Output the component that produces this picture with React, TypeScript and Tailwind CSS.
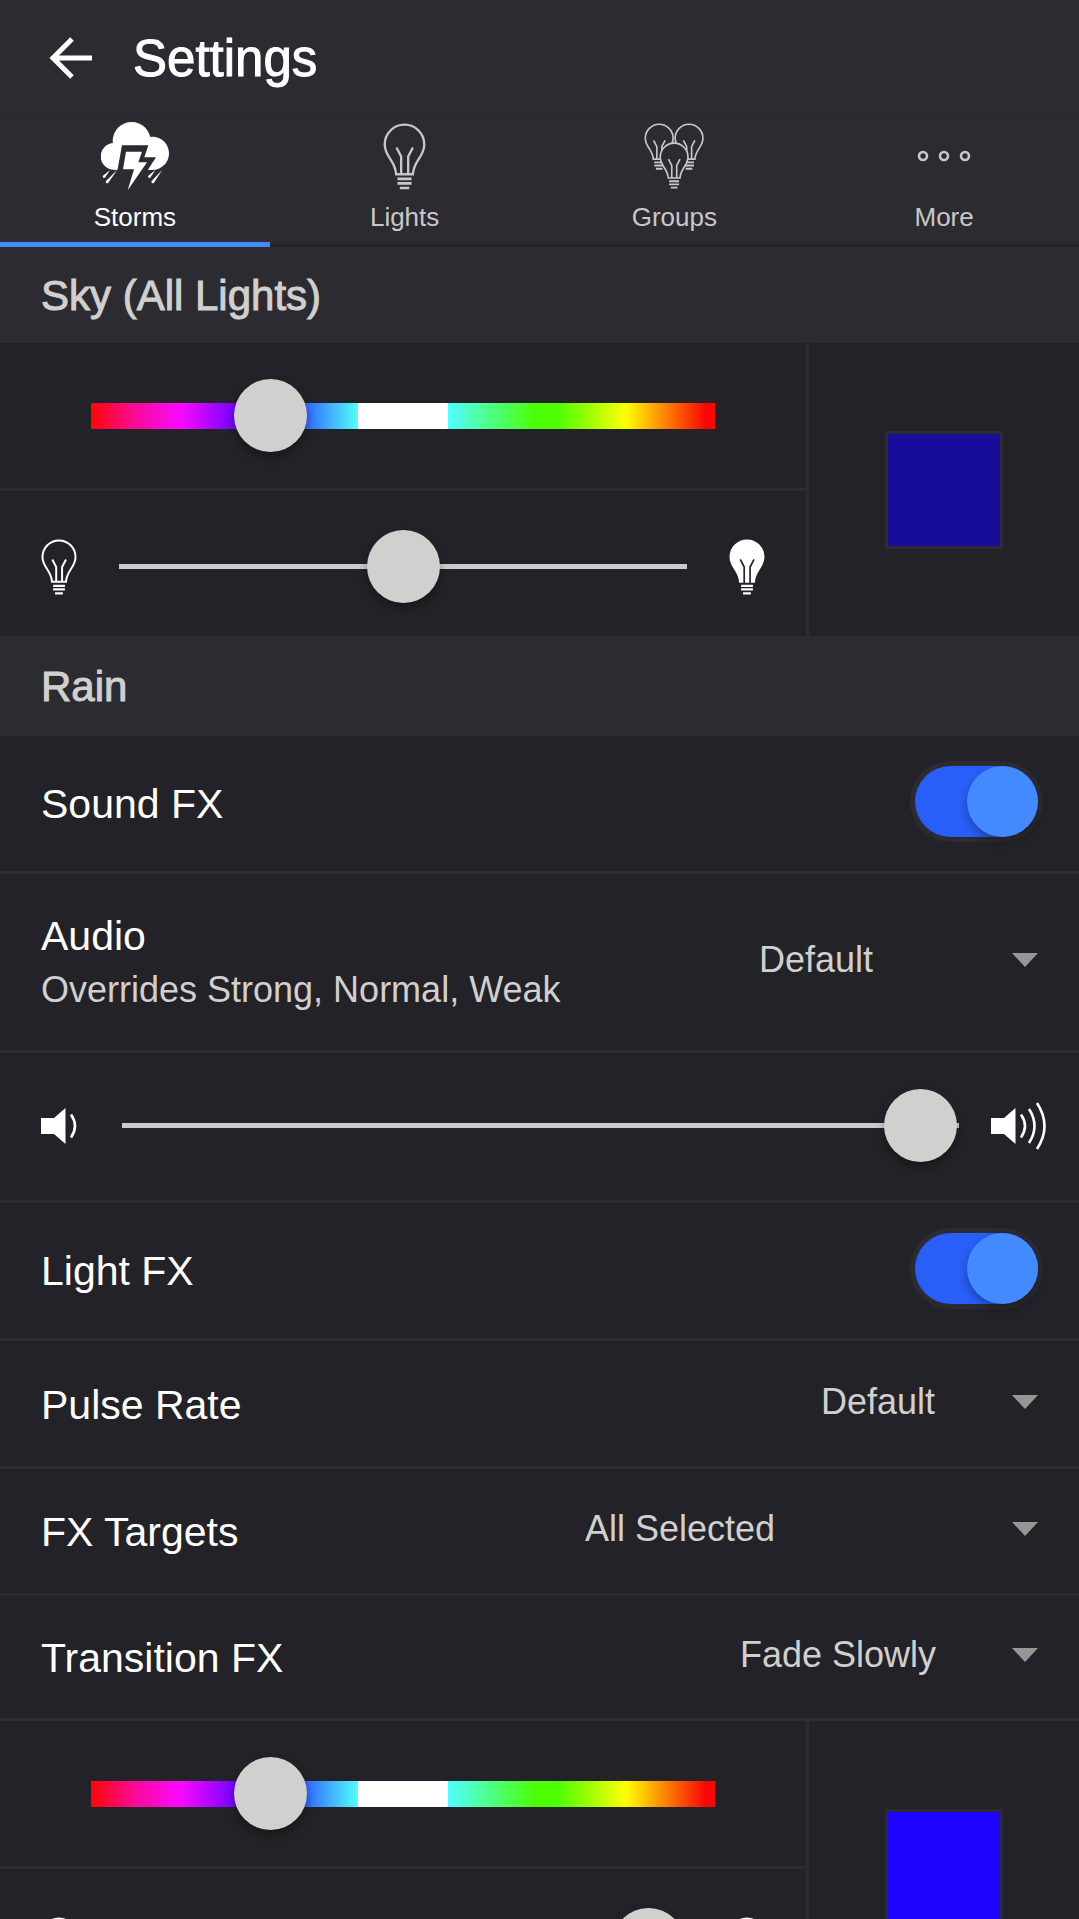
import type { ReactNode } from "react";
import clsx from "clsx";

const BULB_GLASS =
  "M79 190C77 150 45 138 45 101A59 59 0 0 1 163 101C163 138 131 150 129 190Z";
const BULB_FILAMENT = "M80 110L94 137V190M129 110L115 137V190";
const BULB_BASE =
  "M83 200H125V208H83ZM83 213H125V221H83ZM90 227H118V235H90Z";

const BulbShape = ({ glassFill = "none" }: { glassFill?: string }) => (
  <>
    <g fill={glassFill} stroke="currentColor" strokeWidth="7">
      <path d={BULB_GLASS} />
      <path d={BULB_FILAMENT} fill="none" />
    </g>
    <path d={BULB_BASE} fill="currentColor" />
  </>
);

const BulbIcon = ({ className }: { className: string }) => (
  <svg viewBox="40 37 128 200" className={className} aria-hidden="true">
    <BulbShape />
  </svg>
);

const BulbFilledIcon = ({ className }: { className: string }) => (
  <svg viewBox="40 37 128 200" className={className} aria-hidden="true">
    <path d={BULB_GLASS} fill="currentColor" stroke="currentColor" strokeWidth="7" />
    <path
      d="M80 110L94 137V194M129 110L115 137V194"
      fill="none"
      stroke="#232228"
      strokeWidth="6"
    />
    <path d={BULB_BASE} fill="currentColor" />
  </svg>
);

const StormIcon = () => (
  <svg viewBox="33 35 204 204" className="size-[68px]" aria-hidden="true">
    <g fill="currentColor">
      <circle cx="125" cy="92" r="57" />
      <circle cx="187" cy="129" r="50" />
      <circle cx="72" cy="138" r="40" />
      <path d="M72 120H187V178H72Z" />
    </g>
    <path d="M96 105H175L163 141H198L172 181H82Z" fill="#2c2b31" />
    <path
      d="M108 124H156L145 156H171L113 240L132 177H99Z"
      fill="currentColor"
    />
    <g fill="currentColor">
      <path d="M60 179L46 201A4 4 0 0 1 39 196Z" />
      <path d="M82 178L55 217A4 4 0 0 1 48 212Z" />
      <path d="M196 179L182 201A4 4 0 0 1 175 196Z" />
      <path d="M217 178L192 217A4 4 0 0 1 185 212Z" />
    </g>
  </svg>
);

const GroupsIcon = () => (
  <svg viewBox="41 37 184 202" className="h-[67px] w-[61px]" aria-hidden="true">
    <g transform="translate(13 11) scale(.71)">
      <BulbShape />
    </g>
    <g transform="translate(103 11) scale(.71)">
      <BulbShape />
    </g>
    <g transform="translate(58 68) scale(.71)">
      <BulbShape glassFill="#2c2b31" />
    </g>
  </svg>
);

const MoreIcon = () => (
  <svg viewBox="0 0 54 12" className="h-3 w-[54px]" aria-hidden="true">
    <g fill="none" stroke="currentColor" strokeWidth="2.6">
      <circle cx="6" cy="6" r="4" />
      <circle cx="27" cy="6" r="4" />
      <circle cx="48" cy="6" r="4" />
    </g>
  </svg>
);

const SPEAKER = "M0 16H13L24.500 6V42L13 32H0Z";

const VolumeLowIcon = () => (
  <svg viewBox="0 0 36 48" className="h-12 w-9 shrink-0" aria-hidden="true">
    <path d={SPEAKER} fill="currentColor" />
    <path d="M30 12.500Q38 24 30 35.500" fill="none" stroke="currentColor" strokeWidth="2.600" />
  </svg>
);

const VolumeHighIcon = () => (
  <svg viewBox="0 0 56 48" className="h-12 w-14 shrink-0" aria-hidden="true">
    <path d={SPEAKER} fill="currentColor" />
    <path
      d="M30 12.500Q38 24 30 35.500M38 7Q49 24 38 41M46 1Q61 24 46 47"
      fill="none"
      stroke="currentColor"
      strokeWidth="2.600"
    />
  </svg>
);

const tabs = [
  { name: "Storms", icon: <StormIcon />, active: true },
  { name: "Lights", icon: <BulbIcon className="h-[67px] w-[43px]" />, active: false },
  { name: "Groups", icon: <GroupsIcon />, active: false },
  { name: "More", icon: <MoreIcon />, active: false },
];

const Header = () => (
  <header className="shrink-0 bg-[#2c2b31]">
    <div className="flex h-[115px] items-center gap-10 border-b border-[#29282e] pt-0.5 pl-[49px]">
      <button type="button" aria-label="Back">
        <svg viewBox="0 0 44 44" className="size-11" aria-hidden="true">
          <path
            d="M43 22H4M23 3L4 22L23 41"
            fill="none"
            stroke="currentColor"
            strokeWidth="5"
          />
        </svg>
      </button>
      <h1 className="text-[51px] leading-none [-webkit-text-stroke:1px]">Settings</h1>
    </div>
    <nav className="grid h-[132px] grid-cols-4">
      {tabs.map((tab) => (
        <button
          key={tab.name}
          type="button"
          aria-current={tab.active ? "page" : undefined}
          className={clsx(
            "flex flex-col items-center pt-[7px]",
            tab.active ? "text-white" : "text-[#c8c8c8]"
          )}
        >
          <span className="flex h-[68px] items-center">{tab.icon}</span>
          <span className="mt-2.5 text-[26px] leading-[34px]">{tab.name}</span>
          <span
            className={clsx(
              "mt-auto w-full",
              tab.active ? "h-[5px] bg-[#448aff]" : "h-[3px] bg-[#232228]"
            )}
          />
        </button>
      ))}
    </nav>
  </header>
);

const SectionTitle = ({ className, children }: { className: string; children: ReactNode }) => (
  <h2
    className={clsx(
      "flex items-center bg-[#2c2b31] px-[41px] pt-0.5 text-[42px] leading-none text-[#d0d0ce] [-webkit-text-stroke:1px]",
      className
    )}
  >
    {children}
  </h2>
);

const THUMB =
  "h-[73px] min-w-0 flex-1 appearance-none bg-transparent [&::-webkit-slider-thumb]:size-[73px] [&::-webkit-slider-thumb]:appearance-none [&::-webkit-slider-thumb]:rounded-full [&::-webkit-slider-thumb]:bg-[#d0d0ce] [&::-webkit-slider-thumb]:shadow-[0_5px_10px_rgba(0,0,0,0.35)]";

const LevelSlider = ({ label, value }: { label: string; value: number }) => (
  <input
    type="range"
    aria-label={label}
    max={1000}
    defaultValue={value}
    className={clsx(
      THUMB,
      "[&::-webkit-slider-runnable-track]:h-[5px] [&::-webkit-slider-runnable-track]:bg-[#cbcbcb] [&::-webkit-slider-thumb]:-mt-[34px]"
    )}
  />
);

const ColorSlider = ({ label, value }: { label: string; value: number }) => (
  <input
    type="range"
    aria-label={label}
    max={1000}
    defaultValue={value}
    className={clsx(
      THUMB,
      "[&::-webkit-slider-runnable-track]:h-[26px] [&::-webkit-slider-runnable-track]:bg-[linear-gradient(to_right,#ff0505,#fa0a96_7%,#fa0aff_14.3%,#1e00ff_28.6%,#50ffff_42.8%,#fff_42.8%,#fff_57.2%,#50ffff_57.2%,#4bff00_71.4%,#50ff05_75%,#ffff00_85.7%,#fa0505_98.5%)] [&::-webkit-slider-thumb]:-mt-6"
    )}
  />
);

interface ColorPickerProps {
  name: string;
  hue: number;
  brightness: number;
  swatch: string;
}

const ColorPicker = ({ name, hue, brightness, swatch }: ColorPickerProps) => (
  <div className="grid grid-cols-4">
    <div className="col-span-3 border-r-[3px] border-[#2c2b31]">
      <div className="flex h-[148px] items-center border-b-[3px] border-[#2c2b31] px-[91px]">
        <ColorSlider label={`${name} color`} value={hue} />
      </div>
      <div className="flex h-[145px] items-center gap-[42px] px-[41px] pt-1.5">
        <BulbIcon className="h-14 w-9 shrink-0" />
        <LevelSlider label={`${name} brightness`} value={brightness} />
        <BulbFilledIcon className="h-14 w-9 shrink-0" />
      </div>
    </div>
    <div className="flex items-center justify-center">
      <div className={clsx("size-[118px] border-[3px] border-[#2c2b31]", swatch)} />
    </div>
  </div>
);

const ToggleRow = ({ label }: { label: string }) => (
  <label className="flex h-[138px] items-center justify-between border-b-[3px] border-[#2c2b31] px-[41px] pt-0.5 text-[41px]">
    {label}
    <input
      type="checkbox"
      role="switch"
      defaultChecked
      className="mb-1.5 h-[71px] w-[123px] appearance-none rounded-full bg-[#5a5a60] ring-[5px] ring-[#2c2b31] before:block before:size-[71px] before:rounded-full before:bg-[#448aff] before:shadow-[0_5px_10px_rgba(0,0,0,0.3)] checked:bg-[#285ff8] checked:before:translate-x-[52px]"
    />
  </label>
);

interface SelectRowProps {
  id: string;
  label: string;
  note?: string;
  value: string;
  rowClass: string;
  selectClass: string;
}

const SelectRow = ({ id, label, note, value, rowClass, selectClass }: SelectRowProps) => (
  <div
    className={clsx(
      "flex items-center justify-between border-b-[3px] border-[#2c2b31] px-[41px] pt-0.5",
      rowClass
    )}
  >
    <label htmlFor={id} className="text-[41px] leading-[54px]">
      {label}
      {note && <span className="block text-[36px] text-[#d0d0ce]">{note}</span>}
    </label>
    <div className={clsx("mb-1.5 flex items-center", selectClass)}>
      <select
        id={id}
        defaultValue={value}
        className="min-w-0 flex-1 appearance-none bg-transparent text-[36px] text-[#d0d0ce]"
      >
        <option>{value}</option>
      </select>
      <svg viewBox="0 0 26 14" className="h-3.5 w-[26px] shrink-0" aria-hidden="true">
        <path d="M0 0H26L13 14Z" fill="#969695" />
      </svg>
    </div>
  </div>
);

const App = () => {
  return (
    <div className="flex h-screen flex-col bg-[#232228] font-['Liberation_Sans',Arial,sans-serif] text-white">
      <Header />
      <main className="flex-1 overflow-y-auto [scrollbar-width:none]">
        <SectionTitle className="h-24">Sky (All Lights)</SectionTitle>
        <ColorPicker name="Sky" hue={259} brightness={500} swatch="bg-[#180d9b]" />

        <SectionTitle className="h-[100px]">Rain</SectionTitle>
        <ToggleRow label="Sound FX" />
        <SelectRow
          id="audio"
          label="Audio"
          note="Overrides Strong, Normal, Weak"
          value="Default"
          rowClass="h-[179px]"
          selectClass="w-[279px]"
        />
        <div className="flex h-[150px] items-center border-b-[3px] border-[#2c2b31] pr-8 pb-0.5 pl-[41px]">
          <VolumeLowIcon />
          <div className="flex flex-1 pr-8 pl-[45px]">
            <LevelSlider label="Rain volume" value={998} />
          </div>
          <VolumeHighIcon />
        </div>
        <ToggleRow label="Light FX" />
        <SelectRow
          id="pulse-rate"
          label="Pulse Rate"
          value="Default"
          rowClass="h-32"
          selectClass="w-[217px]"
        />
        <SelectRow
          id="fx-targets"
          label="FX Targets"
          value="All Selected"
          rowClass="h-[127px]"
          selectClass="w-[453px]"
        />
        <SelectRow
          id="transition-fx"
          label="Transition FX"
          value="Fade Slowly"
          rowClass="h-[125px]"
          selectClass="w-[298px]"
        />
        <ColorPicker name="Rain" hue={259} brightness={995} swatch="bg-[#1e05ff]" />
      </main>
    </div>
  );
};

export default App;
